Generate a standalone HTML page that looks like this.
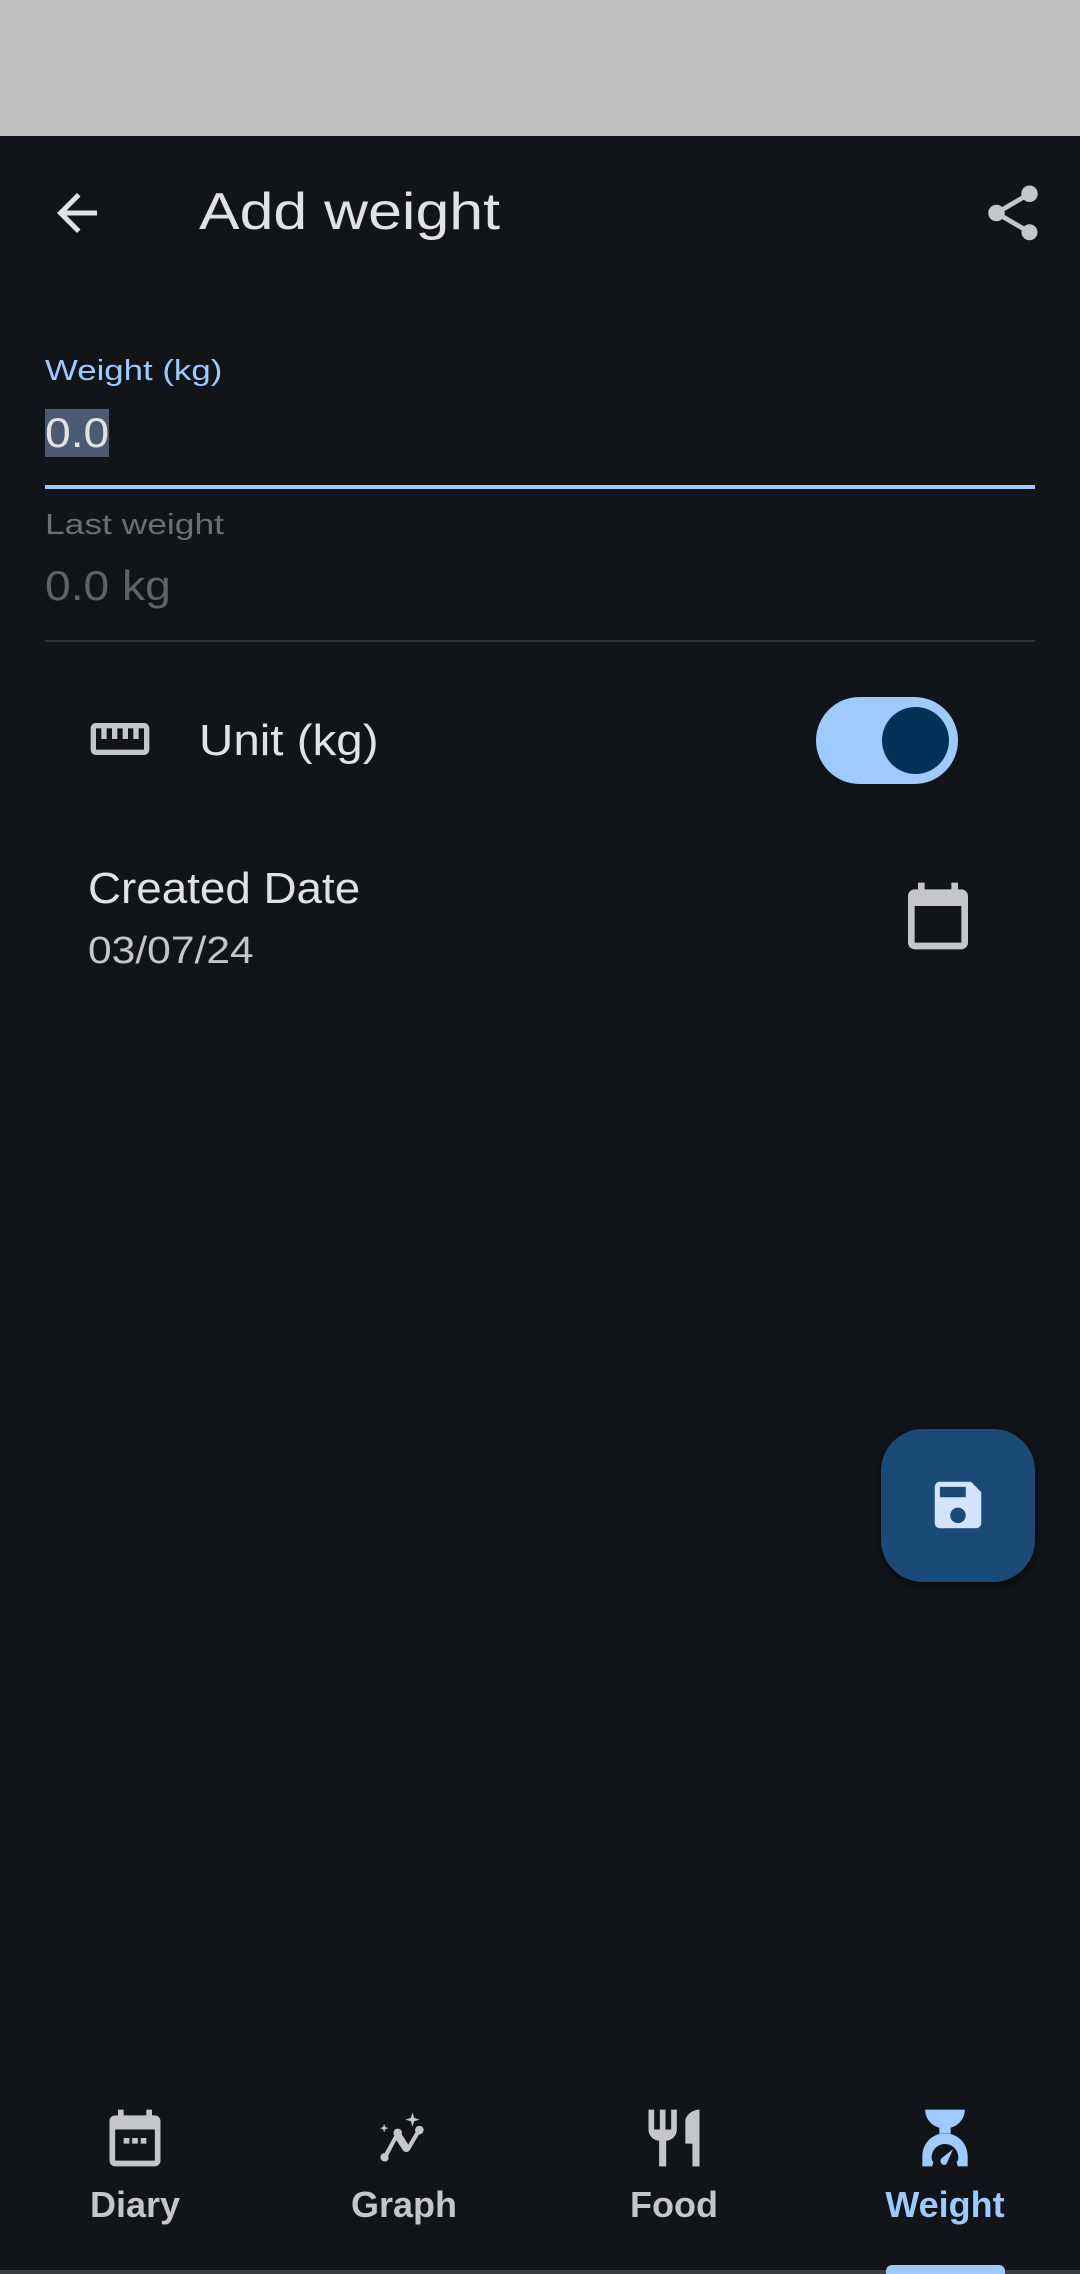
<!DOCTYPE html>
<html><head><meta charset="utf-8"><style>
html,body{margin:0;padding:0;width:1080px;height:2274px;background:#111418;overflow:hidden;font-family:"Liberation Sans",sans-serif;color:#e1e2e8}
.a{position:absolute}
.t{position:absolute;white-space:nowrap;transform-origin:0 50%}
</style></head><body>
<div class="a" style="left:0;top:0;width:1080px;height:136px;background:#c0c0c0"></div>

<svg class="a" style="left:47px;top:183px" width="60" height="60" viewBox="0 0 24 24"><path fill="#e1e2e8" d="M20 11H7.83l5.59-5.59L12 4l-8 8 8 8 1.41-1.41L7.83 13H20v-2z"/></svg>
<div class="t" style="left:199px;top:180px;font-size:52px;line-height:64px;color:#e1e2e8;transform:scaleX(1.17)">Add weight</div>
<svg class="a" style="left:980px;top:180px" width="66" height="66" viewBox="0 0 24 24"><path fill="#c4c6cb" d="M18 16.08c-.76 0-1.44.3-1.960.77L8.91 12.7c.05-.23.09-.46.09-.7s-.04-.47-.09-.7l7.05-4.11c.54.5 1.25.81 2.04.81 1.66 0 3-1.34 3-3s-1.34-3-3-3-3 1.34-3 3c0 .24.04.47.09.7L8.04 9.81C7.5 9.31 6.79 9 6 9c-1.66 0-3 1.34-3 3s1.34 3 3 3c.79 0 1.5-.31 2.04-.81l7.12 4.16c-.05.21-.08.43-.08.65 0 1.61 1.31 2.92 2.920 2.92s2.92-1.31 2.92-2.92-1.31-2.92-2.92-2.92z"/></svg>

<div class="t" style="left:45px;top:353px;font-size:29px;line-height:36px;color:#9ecaff;transform:scaleX(1.2)">Weight (kg)</div>
<div class="a" style="left:45px;top:409px;width:64px;height:48px;background:#4a5a70"></div>
<div class="t" style="left:45px;top:408px;font-size:42px;line-height:50px;color:#e1e2e8;transform:scaleX(1.1)">0.0</div>
<div class="a" style="left:45px;top:485px;width:990px;height:4px;background:#9ecaff"></div>
<div class="t" style="left:45px;top:507px;font-size:29px;line-height:36px;color:#6b6e73;transform:scaleX(1.22)">Last weight</div>
<div class="t" style="left:45px;top:561px;font-size:42px;line-height:50px;color:#5f6267;transform:scaleX(1.1)">0.0 kg</div>
<div class="a" style="left:45px;top:640px;width:990px;height:2px;background:#2e3136"></div>

<svg class="a" style="left:88px;top:707px" width="64" height="64" viewBox="0 0 24 24"><path fill="#c4c6cb" d="M21 6H3c-1.1 0-2 .9-2 2v8c0 1.1.9 2 2 2h18c1.1 0 2-.9 2-2V8c0-1.1-.9-2-2-2zm0 10H3V8h2v4h2V8h2v4h2V8h2v4h2V8h2v4h2V8h2v8z"/></svg>
<div class="t" style="left:199px;top:716px;font-size:44px;line-height:50px;color:#e1e2e8;transform:scaleX(1.08)">Unit (kg)</div>
<div class="a" style="left:816px;top:697px;width:142px;height:87px;border-radius:44px;background:#9ecaff"></div>
<div class="a" style="left:882px;top:707px;width:67px;height:67px;border-radius:50%;background:#003258"></div>

<div class="t" style="left:88px;top:864px;font-size:44px;line-height:50px;color:#e1e2e8;transform:scaleX(1.04)">Created Date</div>
<div class="t" style="left:88px;top:929px;font-size:38px;line-height:44px;color:#c4c6cb;transform:scaleX(1.12)">03/07/24</div>
<svg class="a" style="left:898px;top:876px" width="80" height="80" viewBox="0 0 24 24"><path fill="#c4c6cb" d="M19 4h-1V2h-2v2H8V2H6v2H5c-1.11 0-2 .9-2 2v14c0 1.1.89 2 2 2h14c1.1 0 2-.9 2-2V6c0-1.1-.9-2-2-2zm0 16H5V9h14v11z"/></svg>

<div class="a" style="left:881px;top:1429px;width:154px;height:153px;border-radius:42px;background:#1b4a77;box-shadow:0 4px 10px rgba(0,0,0,.45)"></div>
<svg class="a" style="left:927px;top:1474px" width="62" height="62" viewBox="0 0 24 24"><path fill="#d3e4ff" d="M17 3H5c-1.11 0-2 .9-2 2v14c0 1.1.89 2 2 2h14c1.1 0 2-.9 2-2V7l-4-4zm-5 16c-1.66 0-3-1.34-3-3s1.34-3 3-3 3 1.34 3 3-1.34 3-3 3zm3-10H5V5h10v4z"/></svg>

<svg class="a" style="left:101px;top:2104px" width="68" height="68" viewBox="0 0 24 24"><path fill="#c4c6cb" d="M19 4h-1V2h-2v2H8V2H6v2H5c-1.1 0-2 .9-2 2v14c0 1.1.9 2 2 2h14c1.1 0 2-.9 2-2V6c0-1.1-.9-2-2-2zm0 16H5V9h14v11zM8 12h2v2H8zm3 0h2v2h-2zm3 0h2v2h-2z"/></svg>
<svg class="a" style="left:370px;top:2104px" width="68" height="68" viewBox="0 0 24 24"><g fill="#c4c6cb"><path d="M6.5 19.5a1.5 1.5 0 1 1-1.3-2.2l3.4-6.2a1.5 1.5 0 1 1 2.6-.4l2.3 3.6 2.6-4.4a1.5 1.5 0 1 1 1.2.8l-3.2 5.5a1.5 1.5 0 0 1-2.3.4l-2.5-3.8-2.8 5.3z"/><path d="M15 3l.6 1.9L17.5 5.5l-1.9.6L15 8l-.6-1.9L12.5 5.5l1.9-.6z"/><path d="M5 7l.4 1.1 1.1.4-1.1.4L5 10l-.4-1.1-1.1-.4 1.1-.4z"/></g></svg>
<svg class="a" style="left:640px;top:2104px" width="68" height="68" viewBox="0 0 24 24"><path fill="#c4c6cb" d="M11 9H9V2H7v7H5V2H3v7c0 2.12 1.66 3.84 3.75 3.97V22h2.5v-9.03C11.34 12.84 13 11.12 13 9V2h-2v7zm5-3v8h2.5v8H21V2c-2.76 0-5 2.24-5 4z"/></svg>
<svg class="a" style="left:911px;top:2104px" width="68" height="68" viewBox="0 0 24 24"><g fill="#9ecaff"><path d="M5 2h14c0 3-2 5.6-5 6.4V10.5h-4V8.4C7 7.6 5 5 5 2z"/><path d="M10 10.6C6.5 11.5 4 14.6 4 18.5V22h3.5l.4-1.6c-.6-.4-.6-1-.6-1.5 0-2.6 2-4.8 4.7-4.8s4.7 2.2 4.7 4.8c0 .5 0 1.1-.6 1.5l.4 1.6H20v-3.5c0-3.9-2.5-7-6-7.9z"/><path d="M11.4 21.5c-1-.4-1.3-1.6-.6-2.4l4-3.1-2 4.6c-.3.8-.9 1.1-1.4.9z"/></g></svg>

<div class="a" style="left:35px;top:2184px;width:200px;text-align:center;font-size:36px;line-height:42px;font-weight:bold;color:#c4c6cb">Diary</div>
<div class="a" style="left:304px;top:2184px;width:200px;text-align:center;font-size:36px;line-height:42px;font-weight:bold;color:#c4c6cb">Graph</div>
<div class="a" style="left:574px;top:2184px;width:200px;text-align:center;font-size:36px;line-height:42px;font-weight:bold;color:#c4c6cb">Food</div>
<div class="a" style="left:845px;top:2184px;width:200px;text-align:center;font-size:36px;line-height:42px;font-weight:bold;color:#9ecaff">Weight</div>

<div class="a" style="left:0;top:2270px;width:1080px;height:4px;background:#3a3d42"></div>
<div class="a" style="left:886px;top:2265px;width:119px;height:9px;border-radius:6px 6px 0 0;background:#9ecaff"></div>
</body></html>
